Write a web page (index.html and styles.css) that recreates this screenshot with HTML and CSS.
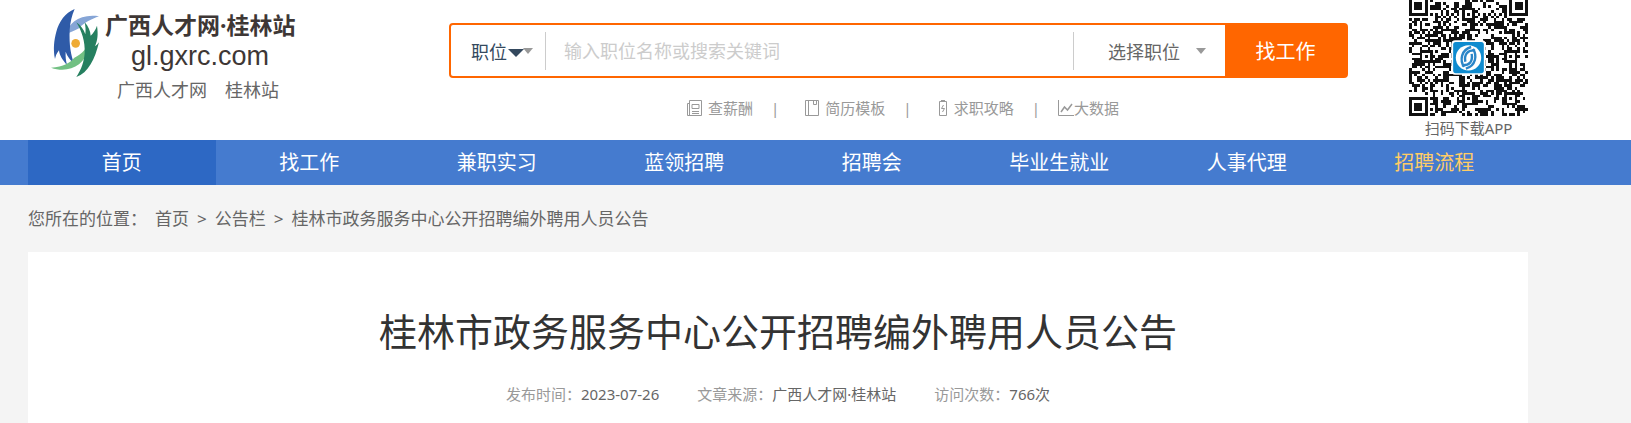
FILE: index.html
```
<!DOCTYPE html>
<html lang="zh-CN">
<head>
    <meta charset="UTF-8">
    <meta name="viewport" content="width=device-width, initial-scale=1.0">
    <title>桂林市政务服务中心公开招聘编外聘用人员公告</title>
    <link rel="stylesheet" href="styles.css">
</head>
<body>
    <header class="header">
        <div class="wrap header-inner">
            <div class="brand">
                <a class="logo" href="#">
                    <svg class="logo-mark" viewBox="0 0 144 204" aria-hidden="true">
                        <path fill="#86a5d6" d="M47 76C52 42 86 14 144 22C122 30 100 40 84 58C70 66 56 70 47 76Z"/>
                        <path fill="#2f5ba8" d="M71 0C62 20 58 40 56 62C54 108 60 140 70 165C58 154 49 142 44 128C43 144 45 156 48 168C35 154 25 139 24 124C16 134 14 142 12 150C6 120 9 94 16 68C24 38 42 12 71 0Z"/>
                        <path fill="#72c083" d="M122 84C124 116 106 146 84 166C62 183 30 187 0 176C38 174 58 160 70 146C92 136 112 116 122 84Z"/>
                        <path fill="#268060" d="M76 40C90 50 98 62 103 76C105 62 103 50 101 40C112 52 118 66 119 80C127 72 134 62 138 50C142 78 140 92 132 112C136 110 140 106 144 100C132 150 112 192 76 204C92 180 99 158 101 132C103 98 92 66 76 40Z"/>
                        <circle cx="74" cy="103" r="13" fill="#efab34"/>
                    </svg>
                    <span class="logo-text">
                        <span class="logo-name">广西人才网·桂林站</span>
                        <span class="logo-domain">gl.gxrc.com</span>
                    </span>
                </a>
                <div class="site-links">
                    <a href="#">广西人才网</a>
                    <a href="#">桂林站</a>
                </div>
            </div>

            <div class="search">
                <form class="search-form">
                    <button class="type-btn" type="button">职位<span class="caret-dark"></span><span class="caret"></span></button>
                    <input class="keyword" type="text" aria-label="关键词" placeholder="输入职位名称或搜索关键词">
                    <button class="job-btn" type="button">选择职位<span class="caret"></span></button>
                    <button class="search-btn" type="submit">找工作</button>
                </form>
                <ul class="quick">
                    <li><a href="#">
                        <svg width="16" height="18" viewBox="0 0 16 18"><path d="M3.5 1.5h12v15h-14v-12h2zM3.5 4v12M6 5.500h7v4h-7zM6 12.500h7M6 14.500h7"/></svg>查薪酬</a></li>
                    <li><a href="#">
                        <svg width="14" height="18" viewBox="0 0 14 18"><path d="M.5 1.500h13v15h-13zM3.500 1.500v15M8.500 1.500v4h3v-4"/></svg>简历模板</a></li>
                    <li><a href="#">
                        <svg width="10" height="18" viewBox="0 0 10 18"><path d="M3 1.500h4M1.500 2.500h7v14h-7zM5.500 6l-2 3.500h3l-2 3.500"/></svg>求职攻略</a></li>
                    <li><a href="#">
                        <svg width="16" height="18" viewBox="0 0 16 18"><path d="M.5 1v15.500h15.500"/><path stroke-width="1.500" d="M3 13l3.500-5 3 3L14 5"/></svg>大数据</a></li>
                </ul>
            </div>

            <div class="app">
                <svg class="qr" viewBox="0 0 45 45" role="img" aria-label="扫码下载APP">
                    <path id="qrModules" fill="#111" shape-rendering="crispEdges"/>
                    <rect x="16" y="16.400" width="13" height="13" rx="1.500" fill="#fff"/>
                    <rect x="16.700" y="17" width="11.600" height="11.800" rx="1" fill="#0e8bcf"/>
                    <circle cx="22.500" cy="23" r="4.800" fill="#fff"/>
                    <g fill="none" stroke="#2b86c8" stroke-width="0.900">
                        <path d="M23.500 18.900C19.600 20 19.200 24 20.800 26.400M21.300 24.500C20.800 21.800 22 20 25 20.200"/>
                        <path d="M21.500 27.100C25.400 26 25.800 22 24.200 19.600M23.700 21.500C24.200 24.200 23 26 20 25.800"/>
                    </g>
                </svg>
                <span>扫码下载APP</span>
            </div>
        </div>
    </header>

    <nav class="nav">
        <div class="wrap nav-inner">
            <a class="active" href="#">首页</a>
            <a href="#">找工作</a>
            <a href="#">兼职实习</a>
            <a href="#">蓝领招聘</a>
            <a href="#">招聘会</a>
            <a href="#">毕业生就业</a>
            <a href="#">人事代理</a>
            <a class="hot" href="#">招聘流程</a>
        </div>
    </nav>

    <main class="wrap">
        <div class="crumbs">
            <span class="crumbs-label">您所在的位置：</span>
            <a href="#">首页</a>
            <span>&gt;</span>
            <a href="#">公告栏</a>
            <span>&gt;</span>
            <span>桂林市政务服务中心公开招聘编外聘用人员公告</span>
        </div>
        <article class="article">
            <h1>桂林市政务服务中心公开招聘编外聘用人员公告</h1>
            <div class="meta">
                <span>发布时间：<b>2023-07-26</b></span>
                <span>文章来源：<b>广西人才网·桂林站</b></span>
                <span>访问次数：<b>766次</b></span>
            </div>
        </article>
    </main>

    <script src="qr.js"></script>
</body>
</html>
```
FILE: styles.css
```
* {
    box-sizing: border-box;
}
body {
    margin: 0;
    font-family: "Noto Sans", "Noto Sans CJK SC", sans-serif;
    font-size: 15px;
    color: #666;
    background-color: #f4f4f4;
}
a {
    color: inherit;
    text-decoration: none;
}
button, input {
    font-family: inherit;
    border: none;
    background: none;
    padding: 0;
}
.wrap {
    max-width: 1528px;
    padding-left: 28px;
}

/* header */
.header {
    background: #fff;
}
.header-inner {
    display: grid;
    grid-template-columns: 421px minmax(0, 899px) 1fr;
    grid-template-rows: 140px;
    overflow: hidden;
}
.brand {
    padding: 9px 0 0 23px;
}
.logo {
    display: flex;
    gap: 6px;
}
.logo-mark {
    width: 48px;
    height: 68px;
}
.logo-text {
    display: flex;
    flex-direction: column;
    color: #3e3735;
}
.logo-name {
    font-size: 23px;
    font-weight: bold;
    line-height: 32px;
}
.logo-domain {
    padding-left: 26px;
    font-family: "Liberation Sans", Arial, sans-serif;
    font-size: 27px;
    line-height: 30px;
}
.site-links {
    display: flex;
    gap: 18px;
    padding-left: 66px;
    font-size: 18px;
    line-height: 26px;
}
.search {
    padding-top: 23px;
}
.search-form {
    display: flex;
    align-items: center;
    height: 55px;
    border: 2px solid #ff6600;
    border-radius: 4px;
}
.type-btn {
    display: flex;
    align-items: center;
    width: 95px;
    height: 38px;
    padding-left: 20px;
    border-right: 1px solid #ccc;
    font-size: 18px;
    color: #34495e;
}
.caret-dark {
    border: 8px solid transparent;
    border-top-color: #34495e;
    border-bottom: none;
    margin: 4px -1px 0 1px;
}
.caret {
    border: 5px solid transparent;
    border-top: 6px solid #999;
    border-bottom: none;
}
.keyword {
    flex: 1;
    min-width: 0;
    height: 38px;
    padding-left: 18px;
    font-size: 18px;
    color: #333;
    outline: none;
}
.keyword::placeholder {
    color: #ccc;
}
.job-btn {
    display: flex;
    align-items: center;
    gap: 16px;
    width: 152px;
    height: 38px;
    padding-left: 34px;
    border-left: 1px solid #ccc;
    font-size: 18px;
    color: #666;
}
.search-btn {
    width: 121px;
    height: 51px;
    font-size: 20px;
    color: #fff;
    background: #ff6600;
}
.quick {
    display: flex;
    justify-content: center;
    margin: 18px 0 0;
    padding: 0 0 0 8px;
    list-style: none;
    line-height: 24px;
    color: #999;
}
.quick li {
    display: flex;
}
.quick li + li::before {
    content: "|";
    padding: 0 26px 0 18px;
}
.quick li:last-child::before {
    padding-right: 18px;
}
.quick a {
    display: flex;
    align-items: center;
    gap: 6px;
}
.quick li:last-child a {
    gap: 0;
}
.quick svg {
    fill: none;
    stroke: #999;
}
.app {
    display: flex;
    flex-direction: column;
    align-items: center;
    justify-content: flex-end;
    justify-self: end;
    line-height: 24px;
}
.qr {
    flex: none;
    width: 119px;
    height: 119px;
}

/* nav */
.nav {
    background: #457bcf;
}
.nav-inner {
    display: flex;
}
.nav-inner a {
    flex: 1;
    line-height: 45px;
    text-align: center;
    font-size: 20px;
    color: #fff;
}
.nav-inner .active {
    background: #2d68c4;
}
.nav-inner .hot {
    color: #ffcc66;
}

/* content */
.crumbs {
    display: flex;
    gap: 8px;
    font-size: 17px;
    line-height: 67px;
}
.article {
    padding: 49px 0 32px;
    background: #fff;
    text-align: center;
}
.article h1 {
    margin: 0;
    font-size: 38px;
    font-weight: normal;
    line-height: 60px;
    color: #333;
}
.meta {
    display: flex;
    justify-content: center;
    gap: 38px;
    margin-top: 21px;
    line-height: 24px;
    color: #999;
}
.meta b {
    font-weight: normal;
    color: #666;
}
```
FILE: qr.js
```
// draws the 45x45 code: finder and alignment squares, timing lines, data modules
const SIZE = 45;
const finders = [[3, 3], [41, 3], [3, 41]];
const aligns = [[22, 6], [6, 22], [38, 22], [22, 38], [38, 38]];
let seed = 77;

function nextBit() {
    seed = (seed * 1103515245 + 12345) % 2147483648;
    return seed / 2147483648 < 0.5;
}

function isDark(x, y) {
    const data = nextBit();
    for (const [cx, cy] of finders) {
        const d = Math.max(Math.abs(x - cx), Math.abs(y - cy));
        if (d <= 4) return d !== 2 && d !== 4;
    }
    for (const [cx, cy] of aligns) {
        const d = Math.max(Math.abs(x - cx), Math.abs(y - cy));
        if (d <= 2) return d !== 1;
    }
    if (x === 6 || y === 6) return (x + y) % 2 === 0;
    return data;
}

let path = '';
for (let y = 0; y < SIZE; y++) {
    for (let x = 0; x < SIZE; x++) {
        if (isDark(x, y)) path += `M${x} ${y}h1v1h-1z`;
    }
}
document.getElementById('qrModules').setAttribute('d', path);
```
